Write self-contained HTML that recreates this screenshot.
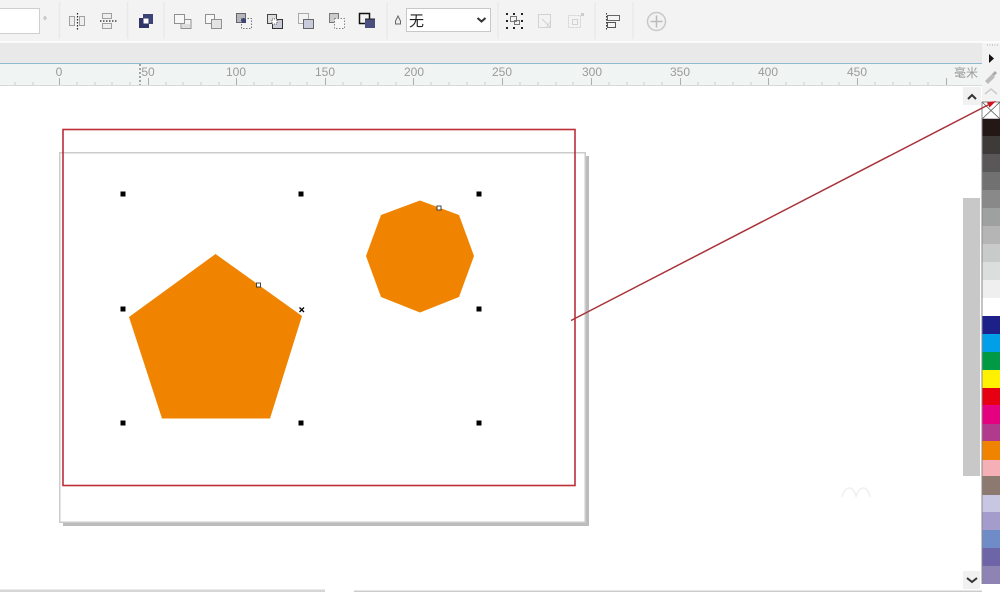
<!DOCTYPE html>
<html lang="zh"><head><meta charset="utf-8"><style>
html,body{margin:0;padding:0;background:#fff}
svg{display:block;position:absolute;left:0;top:0}
text{font-family:"Liberation Sans","Noto Sans CJK SC",sans-serif}
.soft{filter:blur(.35px)}
</style></head><body style="width:1000px;height:592px;overflow:hidden;position:relative">
<svg width="1000" height="592" viewBox="0 0 1000 592" xmlns="http://www.w3.org/2000/svg">
<rect width="1000" height="592" fill="#fff"/>
<!-- toolbar -->
<rect width="1000" height="41" fill="#f3f3f3"/>
<rect y="41" width="1000" height="2" fill="#fbfbfb"/>
<rect y="43" width="982" height="20" fill="#e9e9e9"/>
<rect x="982" y="43" width="18" height="59" fill="#f3f3f3"/>
<rect y="63" width="982" height="1" fill="#8fbad0"/>
<rect y="64" width="982" height="21" fill="#f0f5f4"/>
<rect y="85" width="982" height="1" fill="#d8d8d8"/>
<!-- input -->
<rect x="-2" y="8.500" width="41.500" height="25" fill="#fff" stroke="#cfcfcf"/>
<text x="43" y="24" font-size="10" fill="#888">°</text>
<!-- separators -->
<g stroke="#e9e9e9" stroke-width="1.500">
<path d="M59.500 2V39M127.500 2V39M164 2V39M387 2V39M498 2V39M595 2V39M633 2V39"/>
</g>
<g class="soft">
<!-- mirror icons -->
<g fill="#eee" stroke="#a0a0a0" stroke-width="1">
<path d="M69.500 16.500h5v9h-5zM79.500 16.500h5v9h-5z"/>
<path d="M102.500 13.500h9v5h-9zM102.500 23.500h9v5h-9z"/>
</g>
<path d="M77.500 13V30M100 21H117" stroke="#222" stroke-width="1.200" stroke-dasharray="1.500 1.500" fill="none"/>
<!-- dark combine -->
<rect x="143" y="14" width="10" height="10" fill="#3d4376"/>
<rect x="139" y="18" width="10" height="10" fill="#2f3566"/>
<rect x="143.500" y="18.500" width="5" height="5" fill="#fff"/>
<!-- shape ops -->
<g fill="none" stroke-width="1">
<g stroke="#909090"><rect x="174.500" y="14.500" width="10" height="9" fill="#f7f7f7"/><path d="M184.500 19.500h6.500v9h-10v-5"/></g>
<rect x="182" y="24" width="8" height="4" fill="#ddd"/>
<g stroke="#909090"><rect x="205.500" y="14.500" width="9" height="9" fill="#f7f7f7"/><rect x="211.500" y="19.500" width="10" height="9" fill="#e4e4e6"/></g>
<g stroke="#666"><rect x="236.500" y="13.500" width="9" height="9" fill="#b5b5bd"/></g>
<rect x="241" y="18" width="5" height="5" fill="#3d4376"/>
<rect x="241.500" y="18.500" width="10" height="10" stroke="#777" stroke-dasharray="1.500 1.500"/>
<rect x="267.500" y="14.500" width="9" height="9" stroke="#444" fill="#ddd"/>
<rect x="272.500" y="19.500" width="10" height="9" stroke="#333" fill="#c9cbd6"/>
<rect x="272" y="19" width="5" height="5" fill="#fff" stroke="#555" stroke-dasharray="1 1"/>
<rect x="298.500" y="13.500" width="10" height="10" stroke="#aaa" fill="#f3f3f3"/>
<rect x="303.500" y="19.500" width="10" height="9" stroke="#666" fill="#c9cbdc"/>
<rect x="329.500" y="13.500" width="9" height="9" stroke="#777" fill="#ccc"/>
<rect x="334.500" y="18.500" width="10" height="10" stroke="#888" stroke-dasharray="1.500 1.500" fill="#f7f7f7"/>
<rect x="359.500" y="13.500" width="10" height="10" stroke="#111" stroke-width="1.500" fill="#f3f3f3"/>
<rect x="365" y="19" width="10" height="9" fill="#4a4f80"/>
<path d="M365 19h10" stroke="#222"/>
</g>
<!-- pen -->
<path d="M398 16l2.500 5v3h-5v-3z" fill="#eee" stroke="#666"/>
</g>
<!-- dropdown -->
<rect x="406.500" y="8.500" width="84" height="23" fill="#fff" stroke="#c8c8c8"/>
<text x="409" y="26" font-size="15" fill="#222">无</text>
<path d="M477.500 18l4 3.500 4-3.500" fill="none" stroke="#333" stroke-width="2"/>
<g class="soft">
<!-- selection icon -->
<g fill="#222"><rect x="506" y="13" width="2" height="2"/><rect x="513" y="13" width="2" height="2"/><rect x="521" y="13" width="2" height="2"/><rect x="506" y="20" width="2" height="2"/><rect x="521" y="20" width="2" height="2"/><rect x="506" y="27" width="2" height="2"/><rect x="513" y="27" width="2" height="2"/><rect x="521" y="27" width="2" height="2"/></g>
<g fill="none" stroke="#777"><rect x="510.500" y="16.500" width="6" height="5"/><rect x="514.500" y="20.500" width="5" height="4"/></g>
<g fill="none" stroke="#d2d2d2"><rect x="538.500" y="14.500" width="12" height="13"/><path d="M542 19l8 8M550 22l-4 6"/><rect x="568.500" y="15.500" width="12" height="12" stroke-dasharray="2 1"/><rect x="572.500" y="19.500" width="5" height="5"/></g>
<rect x="581" y="13" width="3" height="3" fill="#ccc"/>
<!-- align -->
<path d="M606.500 13V30" stroke="#333" stroke-dasharray="1.500 1.500"/>
<rect x="607.500" y="15.500" width="12" height="5" fill="#f4f4f4" stroke="#666"/>
<rect x="607.500" y="22.500" width="8" height="5" fill="#f4f4f4" stroke="#555"/>
</g>
<!-- plus -->
<circle cx="656.500" cy="21.500" r="9" fill="#f2f2f2" stroke="#c8c8c8" stroke-width="1.500"/>
<path d="M656.500 15.500v12M650.500 21.500h12" stroke="#bbb" stroke-width="1.500"/>
<!-- ruler labels -->
<g font-size="12" fill="#9a9a9a" text-anchor="middle">
<text x="59" y="76">0</text><text x="148" y="76">50</text><text x="236" y="76">100</text><text x="325" y="76">150</text><text x="414" y="76">200</text><text x="502" y="76">250</text><text x="592" y="76">300</text><text x="680" y="76">350</text><text x="768" y="76">400</text><text x="857" y="76">450</text>
</g>
<text x="954" y="77" font-size="12" fill="#999">毫米</text>
<!-- ruler ticks -->
<path stroke="#adadad" fill="none" d="M59.500 78V85M148.500 78V85M236.500 78V85M325.500 78V85M413.500 78V85M502.500 78V85M591.500 78V85M680.500 78V85M768.500 78V85M857.500 78V85M946.500 78V85"/>
<path stroke="#cdcdcd" fill="none" d="M15 82V85M33 82V85M77 82V85M95 82V85M112 82V85M130 82V85M166 82V85M183 82V85M201 82V85M219 82V85M254 82V85M272 82V85M290 82V85M307 82V85M343 82V85M361 82V85M378 82V85M396 82V85M431 82V85M449 82V85M467 82V85M485 82V85M520 82V85M538 82V85M556 82V85M573 82V85M609 82V85M627 82V85M644 82V85M662 82V85M698 82V85M715 82V85M733 82V85M751 82V85M786 82V85M804 82V85M822 82V85M839 82V85M875 82V85M893 82V85M910 82V85M928 82V85"/>
<path d="M140 64V85" stroke="#555" stroke-dasharray="2 2"/>
<!-- right of ruler -->
<rect x="982" y="43" width="18" height="59" fill="#f3f3f3"/>
<path d="M987 45h12" stroke="#aaa" stroke-dasharray="1 1.500"/>
<path d="M989 54l5 4.500-5 4.500z" fill="#111"/>
<path d="M985 81l7-7 3 3-7 7z" fill="#bbb"/><path d="M992 74l3-3 2 2-3 3z" fill="#aaa"/>
<path d="M985 94l6-5 6 5" fill="none" stroke="#ccc" stroke-width="1.500"/>
<!-- scrollbar -->
<rect x="963" y="87" width="18" height="18" fill="#f1f1f1"/>
<path d="M968 99l4-4 4 4" fill="none" stroke="#333" stroke-width="2"/>
<rect x="963" y="198" width="17" height="278" fill="#c8c8c8"/>
<rect x="963" y="571" width="17" height="18" fill="#f1f1f1"/>
<path d="M967 578l5 4 5-4" fill="none" stroke="#333" stroke-width="2"/>
<!-- palette -->
<rect x="982" y="102" width="18" height="17" fill="#fff" stroke="#666" stroke-width=".8"/>
<path d="M982 102l18 17M1000 102l-18 17" stroke="#555" stroke-width=".8"/>
<rect x="982" y="119" width="18" height="17" fill="#231815"/>
<rect x="982" y="136" width="18" height="18" fill="#3e3a39"/>
<rect x="982" y="154" width="18" height="18" fill="#595757"/>
<rect x="982" y="172" width="18" height="18" fill="#727171"/>
<rect x="982" y="190" width="18" height="18" fill="#898989"/>
<rect x="982" y="208" width="18" height="18" fill="#9fa0a0"/>
<rect x="982" y="226" width="18" height="18" fill="#b5b5b6"/>
<rect x="982" y="244" width="18" height="18" fill="#c9caca"/>
<rect x="982" y="262" width="18" height="18" fill="#dcdddd"/>
<rect x="982" y="280" width="18" height="18" fill="#efefef"/>
<rect x="982" y="298" width="18" height="18" fill="#fff"/>
<rect x="982" y="316" width="18" height="18" fill="#1d2088"/>
<rect x="982" y="334" width="18" height="18" fill="#00a0e9"/>
<rect x="982" y="352" width="18" height="18" fill="#009944"/>
<rect x="982" y="370" width="18" height="18" fill="#fff100"/>
<rect x="982" y="388" width="18" height="17" fill="#e60012"/>
<rect x="982" y="405" width="18" height="19" fill="#e4007f"/>
<rect x="982" y="424" width="18" height="17" fill="#b23a8c"/>
<rect x="982" y="441" width="18" height="19" fill="#f08300"/>
<rect x="982" y="460" width="18" height="16" fill="#f4b0b4"/>
<rect x="982" y="476" width="18" height="19" fill="#8c7a70"/>
<rect x="982" y="495" width="18" height="17" fill="#c9c6e4"/>
<rect x="982" y="512" width="18" height="18" fill="#a49cca"/>
<rect x="982" y="530" width="18" height="18" fill="#6f8cc8"/>
<rect x="982" y="548" width="18" height="18" fill="#6e64a8"/>
<rect x="982" y="566" width="18" height="18" fill="#8d84b4"/>
<rect x="981.500" y="102" width="1" height="482" fill="#8a8a8a"/>
<!-- page -->
<rect x="63" y="156" width="526" height="370" fill="#bcbcbc"/>
<rect x="59.750" y="152.750" width="525.500" height="369.500" fill="#fff" stroke="#cbcbcb" stroke-width="1.500"/>
<!-- watermark -->
<path d="M842 497c3-12 12-12 14 0M856 497c3-12 12-12 14 0" fill="none" stroke="#f0f0f0" stroke-width="1.500"/>
<!-- red frame -->
<rect x="63" y="129.500" width="512" height="356" fill="none" stroke="#bd2e38" stroke-width="1.600"/>
<!-- shapes -->
<path d="M215.500 254L302 316 270 418.500H162L129 317z" fill="#f08300"/>
<path d="M420 200.500L459 215 474 256 459 297 420 312.500 381 297 366 256 381 215z" fill="#f08300"/>
<!-- handles -->
<g fill="#000">
<rect x="120.500" y="191.500" width="5" height="5"/><rect x="298.500" y="191.500" width="5" height="5"/><rect x="476.500" y="191.500" width="5" height="5"/>
<rect x="120.500" y="306.500" width="5" height="5"/><rect x="476.500" y="306.500" width="5" height="5"/>
<rect x="120.500" y="420.500" width="5" height="5"/><rect x="298.500" y="420.500" width="5" height="5"/><rect x="476.500" y="420.500" width="5" height="5"/>
</g>
<path d="M299.500 307.500l4.500 4.500M304 307.500l-4.500 4.500" stroke="#000" stroke-width="1.300"/>
<rect x="256.500" y="283" width="4" height="4" fill="#fff" stroke="#333" stroke-width=".9"/>
<rect x="437" y="206" width="4" height="4" fill="#fff" stroke="#333" stroke-width=".9"/>
<!-- arrow -->
<path d="M571 320.500L988 105" stroke="#a8323a" stroke-width="1.500" fill="none"/>
<path d="M996 101l-9 1.500 2.500 5z" fill="#d0121c"/>
<!-- bottom scroll line -->
<rect y="589.500" width="325" height="2.500" fill="#d6d6d6"/>
<rect x="354" y="590.500" width="628" height="1.500" fill="#cccccc"/>
</svg>
</body></html>
